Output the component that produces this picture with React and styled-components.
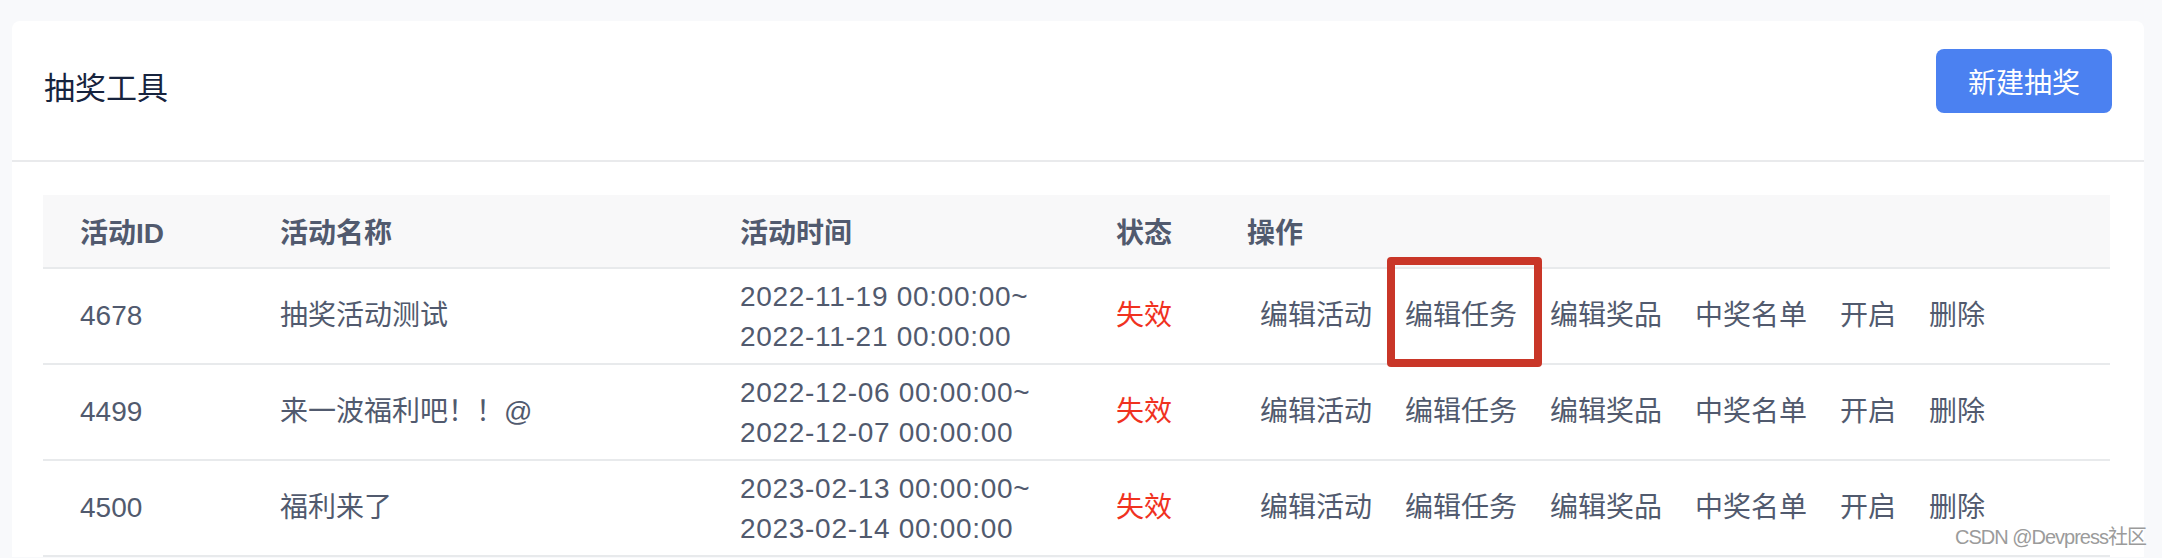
import React from "react";
import styled, { createGlobalStyle } from "styled-components";

const GlobalStyle = createGlobalStyle`
  body {
    margin: 0;
    background: #f8f9fb;
    font-family: "Liberation Sans", "Noto Sans CJK SC", sans-serif;
  }
`;

const Page = styled.div`
  position: relative;
  padding: 21px 18px 0 12px;
  min-height: 537px;
`;

const Card = styled.section`
  background: #fff;
  border-radius: 8px 8px 0 0;
`;

const CardHeader = styled.header`
  display: flex;
  justify-content: space-between;
  align-items: flex-start;
  height: 139px;
  padding: 0 32px;
  border-bottom: 2px solid #e9eaec;
  .title {
    margin-top: 46px;
    font-size: 31px;
    line-height: 44px;
    color: #17233d;
  }
`;

const PrimaryButton = styled.button`
  margin-top: 28px;
  width: 176px;
  height: 64px;
  border: none;
  border-radius: 8px;
  background: #4b81f1;
  color: #fff;
  font-family: inherit;
  font-size: 28px;
  cursor: pointer;
`;

const CardBody = styled.div`
  padding: 33px 34px 0 31px;
`;

const Table = styled.table`
  width: 100%;
  table-layout: fixed;
  border-collapse: collapse;
  font-size: 28px;
  color: #515a6e;
  th {
    height: 72px;
    padding: 0 0 0 37px;
    background: #f8f8f9;
    border-bottom: 2px solid #e8eaec;
    text-align: left;
    font-weight: 700;
    vertical-align: middle;
  }
  td {
    height: 94px;
    padding: 0 0 0 37px;
    border-bottom: 2px solid #e8eaec;
    vertical-align: middle;
    line-height: 40px;
  }
`;

const DateRange = styled.div`
  letter-spacing: 0.7px;
  padding-top: 2px;
`;

const Status = styled.span`
  color: ${(p) => (p.$off ? "#f0321f" : "#19be6b")};
`;

const Actions = styled.div`
  display: flex;
  gap: 33px;
  margin-left: 13px;
`;

const ActionItem = styled.span`
  position: relative;
  white-space: nowrap;
  cursor: pointer;
`;

const Highlight = styled.span`
  position: absolute;
  left: -18px;
  right: -25px;
  top: -39px;
  bottom: -31px;
  border: 8px solid #c93628;
  border-radius: 4px;
  pointer-events: none;
`;

const Watermark = styled.div`
  position: absolute;
  right: 16px;
  top: 522px;
  font-size: 20px;
  line-height: 30px;
  letter-spacing: -1px;
  white-space: nowrap;
  color: #9b9b9b;
`;

const rows = [
  { id: 4678, name: "抽奖活动测试", start: "2022-11-19 00:00:00", end: "2022-11-21 00:00:00" },
  { id: 4499, name: "来一波福利吧！！@", start: "2022-12-06 00:00:00", end: "2022-12-07 00:00:00" },
  { id: 4500, name: "福利来了", start: "2023-02-13 00:00:00", end: "2023-02-14 00:00:00" },
];

const actions = ["编辑活动", "编辑任务", "编辑奖品", "中奖名单", "开启", "删除"];

const App = () => {
  return (
    <>
      <GlobalStyle />
      <Page>
        <Card>
          <CardHeader>
            <span className="title">抽奖工具</span>
            <PrimaryButton>新建抽奖</PrimaryButton>
          </CardHeader>
          <CardBody>
            <Table>
              <colgroup>
                <col style={{ width: 200 }} />
                <col style={{ width: 460 }} />
                <col style={{ width: 376 }} />
                <col style={{ width: 131 }} />
                <col />
              </colgroup>
              <thead>
                <tr>
                  <th>活动ID</th>
                  <th>活动名称</th>
                  <th>活动时间</th>
                  <th>状态</th>
                  <th>操作</th>
                </tr>
              </thead>
              <tbody>
                {rows.map((row, index) => (
                  <tr key={row.id}>
                    <td>{row.id}</td>
                    <td>{row.name}</td>
                    <td>
                      <DateRange>
                        <div>{row.start}~</div>
                        <div>{row.end}</div>
                      </DateRange>
                    </td>
                    <td>
                      <Status $off>失效</Status>
                    </td>
                    <td>
                      <Actions>
                        {actions.map((label) => (
                          <ActionItem key={label}>
                            {label}
                            {index === 0 && label === "编辑任务" && <Highlight />}
                          </ActionItem>
                        ))}
                      </Actions>
                    </td>
                  </tr>
                ))}
              </tbody>
            </Table>
          </CardBody>
        </Card>
        <Watermark>CSDN @Devpress社区</Watermark>
      </Page>
    </>
  );
};

export default App;
